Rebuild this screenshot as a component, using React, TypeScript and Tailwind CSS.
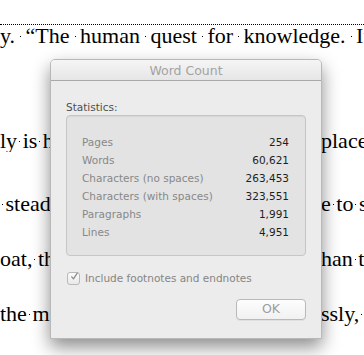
import React from "react";

const ui = { fontFamily: "'DejaVu Sans', 'Liberation Sans', sans-serif" };
const serif = { fontFamily: "'Liberation Serif', 'Times New Roman', serif" };

function Sp({ dx = 2 }: { dx?: number }) {
  return (
    <span className="relative">
      {" "}
      <span className="absolute top-[13px] h-px w-px bg-black" style={{ left: dx }} />
    </span>
  );
}

function Words({ text, dx }: { text: string; dx?: number }) {
  const parts = text.split(" ");
  return (
    <>
      {parts.map((p, i) => (
        <React.Fragment key={i}>
          {i > 0 && <Sp dx={dx} />}
          {p}
        </React.Fragment>
      ))}
    </>
  );
}

function Line({ left, right, className }: { left: string; right?: string; className?: string }) {
  return (
    <div className={"flex whitespace-pre leading-[22px] " + (className ?? "")}>
      <span className="w-[321px] shrink-0 overflow-hidden">
        <Words text={left} />
      </span>
      {right !== undefined && (
        <span>
          <Words text={right} />
        </span>
      )}
    </div>
  );
}

const stats: [string, string][] = [
  ["Pages", "254"],
  ["Words", "60,621"],
  ["Characters (no spaces)", "263,453"],
  ["Characters (with spaces)", "323,551"],
  ["Paragraphs", "1,991"],
  ["Lines", "4,951"],
];

export default function App() {
  return (
    <div className="relative h-[355px] w-[364px] overflow-hidden bg-white">
      <div className="pt-[24px] text-[22px] text-black" style={serif}>
        <div className="border-t border-dotted border-black" />
        <div className="whitespace-pre leading-[22px] [word-spacing:5px]">
          <Words dx={5} text={"y. \u201CThe human quest for knowledge. It is"} />
        </div>
        <Line className="mt-[83px]" left="ly is h" right="place" />
        <Line className="mt-[41px]" left=" steady" right="e to so" />
        <Line className="mt-[33px]" left="oat, th" right="han t" />
        <Line className="mt-[33px]" left="the m" right="ssly, a" />
      </div>

      <div
        className="absolute left-[50px] top-[59px] flex h-[280px] w-[272px] flex-col overflow-hidden rounded-t-[5px] border border-[#b8b8b8] bg-[#ececec] shadow-[0_8px_18px_rgba(0,0,0,0.45)]"
        style={ui}
      >
        <div className="h-[21px] shrink-0 border-b border-[#a9a9a9] bg-gradient-to-b from-[#f5f5f5] to-[#e6e6e6] text-center text-[12.5px] leading-[21px] text-[#a3a3a3]">
          Word Count
        </div>
        <div className="flex flex-1 flex-col px-[15px] pt-[18px]">
          <div className="text-[10.5px] leading-[16px] text-[#4f4f4f]">Statistics:</div>
          <div className="rounded-[4px] border border-[#c6c6c6] bg-[#e3e3e3] pb-[14px] pl-[15px] pr-[16px] pt-[17px] shadow-[inset_0_1px_1px_rgba(0,0,0,0.06)]">
            {stats.map(([k, v]) => (
              <div key={k} className="flex justify-between text-[10.5px] leading-[18px]">
                <span className="text-[#888888]">{k}</span>
                <span className="text-[#1e1e1e]">{v}</span>
              </div>
            ))}
          </div>
          <div className="mt-[13px] flex items-center gap-[5px] text-[10.5px] leading-[18px] text-[#858585]">
            <span className="ml-[1px] flex h-[13px] w-[13px] items-center justify-center rounded-[3px] border border-[#b9b9b9] bg-gradient-to-b from-[#fbfbfb] to-[#e9e9e9]">
              <svg width="13" height="13" viewBox="0 0 13 13" className="-mt-[3px] ml-[2px]">
                <path d="M2.5 7 L5 10 L10.5 1.5" fill="none" stroke="#8c8c8c" strokeWidth="1.8" strokeLinecap="round" strokeLinejoin="round" />
              </svg>
            </span>
            <span>Include footnotes and endnotes</span>
          </div>
          <div className="mt-[12px] flex justify-end">
            <div className="flex h-[21px] w-[70px] items-center justify-center rounded-[4px] border border-[#b9b9b9] bg-gradient-to-b from-[#fdfdfd] to-[#f1f1f1] text-[12.5px] text-[#9d9d9d] shadow-[0_1px_0_rgba(0,0,0,0.05)]">
              OK
            </div>
          </div>
        </div>
      </div>
    </div>
  );
}
